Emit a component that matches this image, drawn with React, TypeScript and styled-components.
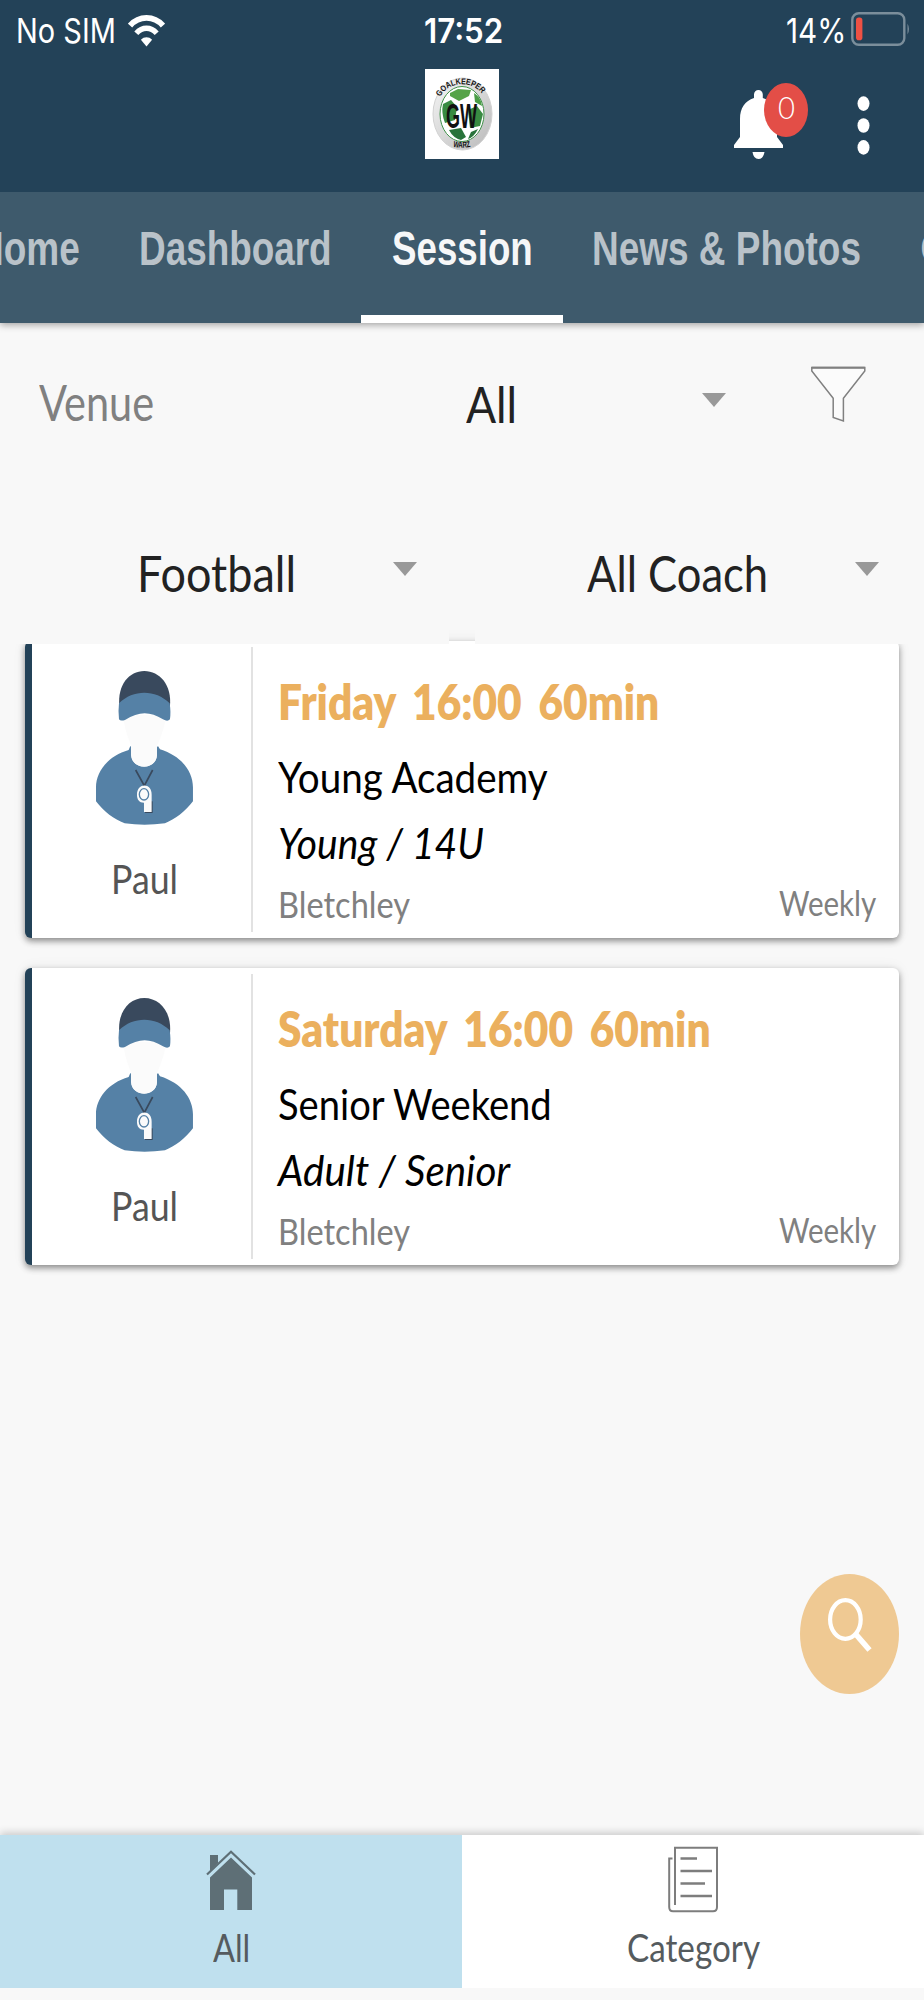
import React, {useLayoutEffect, useRef, useState} from 'react';
import styled, {createGlobalStyle} from "styled-components";

const theme = {
    colors: {
        primary: "#234258",
        tabs: "#3e5a6c",
        page: "#f8f8f8",
        accent: "#ebb05e",
        danger: "#e34e47",
        muted: "#808080",
        active: "#bfe0ee",
    },
    fonts: {
        body: '"Lato", "Open Sans", sans-serif',
        status: '"Inter", "Roboto", sans-serif',
        tabs: '"Liberation Sans", Arial, sans-serif',
    }
}

type FitProps = { width: number, children: string }

// Condenses a line of text to a given width
const Fit = ({width, children}: FitProps) => {
    const ref = useRef<HTMLSpanElement>(null)
    const [scale, setScale] = useState(1)

    useLayoutEffect(() => {
        if (ref.current) setScale(width / ref.current.offsetWidth)
    }, [width, children])

    return (
        <FitBox $width={width}>
            <FitText ref={ref} style={{transform: `scaleX(${scale})`}}>{children}</FitText>
        </FitBox>
    )
}

const sessions = [
    {
        coach: "Paul", time: "Friday 16:00 60min", timeWidth: 381, name: "Young Academy", nameWidth: 270,
        group: "Young / 14U", groupWidth: 206, venue: "Bletchley", repeat: "Weekly"
    },
    {
        coach: "Paul", time: "Saturday 16:00 60min", timeWidth: 433, name: "Senior Weekend", nameWidth: 274,
        group: "Adult / Senior", groupWidth: 232, venue: "Bletchley", repeat: "Weekly"
    },
]

const WifiIcon = () => (
    <svg width="37" height="33" viewBox="0 0 37 33" fill="none">
        <path d="M2 11.5C11 1.2 26 1.2 35 11.5" stroke="#fff" strokeWidth="5.8"/>
        <path d="M8.3 19.2C14.3 12.6 22.7 12.6 28.7 19.2" stroke="#fff" strokeWidth="5.4"/>
        <path d="M18.5 32.5L12.9 25.7C16 22.4 21 22.4 24.1 25.7Z" fill="#fff"/>
    </svg>
)

const BatteryIcon = () => (
    <svg width="60" height="34" viewBox="0 0 60 34">
        <rect x="1.3" y="1.3" width="52" height="31.4" rx="6.5" fill="none" stroke="#7b8e9b" strokeWidth="2.4"/>
        <rect x="5" y="5.6" width="6.4" height="22.6" rx="2.8" fill="#ee5144"/>
        <path d="M56.5 11.5Q59.4 17 56.5 22.5Z" fill="#7b8e9b"/>
    </svg>
)

const ClubLogo = () => (
    <svg width="74" height="90" viewBox="0 0 74 90">
        <defs>
            <linearGradient id="ring" x1="0" y1="0" x2="1" y2="1">
                <stop offset="0" stopColor="#f6f6f6"/>
                <stop offset="1" stopColor="#b9b9b9"/>
            </linearGradient>
            <path id="arcTop" d="M15.5 28C23 11 51 11 58.5 28"/>
            <path id="arcBottom" d="M26 77Q37 80.5 48 77"/>
        </defs>
        <rect width="74" height="90" fill="#fff"/>
        <ellipse cx="37.5" cy="45" rx="29.5" ry="36" fill="url(#ring)" stroke="#d2d2d2" strokeWidth="1"/>
        <ellipse cx="37" cy="45" rx="22" ry="27.5" fill="#fff" stroke="#3f9148" strokeWidth="1"/>
        <path d="M25 24L33 20L46 21L44 27L34 32L25 27Z" fill="#55a347"/>
        <path d="M49 24Q56 28 57 37L50 33Z" fill="#4a9e46"/>
        <path d="M18 35L26 31L32 38L30 51L20 54Q16 44 18 35Z" fill="#398b42"/>
        <path d="M43 41L52 37L58 45L55 57L45 59Z" fill="#398b42"/>
        <path d="M24 61L36 59L41 68L36 71Q28 69 24 61Z" fill="#28733a"/>
        <path d="M46 63L53 60Q49 68 43 70Z" fill="#28733a"/>
        <LogoText x="21" y="58.5" fontSize="35" textLength="31" lengthAdjust="spacingAndGlyphs">GW</LogoText>
        <LogoText fontSize="8.5">
            <textPath href="#arcTop" textLength="49" lengthAdjust="spacingAndGlyphs">GOALKEEPER</textPath>
        </LogoText>
        <LogoText fontSize="8.5">
            <textPath href="#arcBottom" startOffset="2" textLength="18" lengthAdjust="spacingAndGlyphs">WARZ</textPath>
        </LogoText>
    </svg>
)

const BellIcon = () => (
    <svg width="49" height="70" viewBox="0 0 49 70" fill="#fff">
        <path d="M20 8V4.5A4.4 4.5 0 0 1 28.8 4.5V8C38 11 43 18 43 29V47L49 55V58H0V55L6 47V29C6 18 11 11 20 8Z"/>
        <path d="M18.5 62H30.5Q29.5 69 24.5 69T18.5 62Z"/>
    </svg>
)

const DotsIcon = () => (
    <svg width="13" height="60" viewBox="0 0 13 60" fill="#fff">
        <ellipse cx="6.5" cy="7.6" rx="6" ry="7.3"/>
        <ellipse cx="6.5" cy="29.5" rx="6" ry="7.3"/>
        <ellipse cx="6.5" cy="51.4" rx="6" ry="7.3"/>
    </svg>
)

const FunnelIcon = () => (
    <svg width="55" height="57" viewBox="0 0 55 57">
        <path d="M.8 1.5H53.8V5L32.4 32.3V55L22.2 51.5V32.3L.8 5Z" fill="#fbfbfb" stroke="#808080" strokeWidth="1.5"/>
        <path d="M.8 1.7H53.8" stroke="#808080" strokeWidth="2"/>
    </svg>
)

const CoachIcon = () => (
    <svg width="98.3" height="155" viewBox="285 120 295 465">
        <path d="M370 255C372 295 385 325 394 348V385H471V348C481 325 494 295 498 255Z" fill="#fbfbfb"/>
        <path d="M358 228C352 165 387 123 433 123S516 165 510 228Z" fill="#39495d"/>
        <path d="M357 220C400 178 466 178 509 220C512 238 512 255 510 268Q503 276 489 268C450 244 418 243 375 270Q361 274 357 268Q354 245 357 220Z" fill="#5581a6"/>
        <path d="M391 348L394 352V375C396 422 469 422 471 375V352L474 348L480 358C545 378 579 425 579 472V514C555 546 525 568 495 580Q433 588 374 580C342 568 312 546 288 514V472C288 425 324 378 386 360Z" fill="#5581a6"/>
        <path d="M393 350V375C395 421 469 421 471 375V350Z" fill="#fbfbfb"/>
        <path d="M407 420L433 467L458 420" fill="none" stroke="#39495d" strokeWidth="5"/>
        <path d="M435 514H458V549H435Z" fill="#39495d"/>
        <path d="M411 494C411 457 456 457 455 494V546H432V518C418 518 411 509 411 494Z" fill="#fbfbfb"/>
        <ellipse cx="432" cy="493" rx="14" ry="17" fill="#fbfbfb" stroke="#5581a6" strokeWidth="4"/>
    </svg>
)

const SearchIcon = () => (
    <svg width="45" height="55" viewBox="0 0 45 55" fill="none" stroke="#fff">
        <ellipse cx="17.4" cy="21.5" rx="15.3" ry="19.3" strokeWidth="4.2"/>
        <path d="M28 36.5L41.5 52" strokeWidth="5.6"/>
    </svg>
)

const HomeIcon = () => (
    <svg width="50" height="61" viewBox="0 0 50 61" fill="#5e6f76">
        <path d="M4 5H12V13L4 21Z"/>
        <path d="M1 24.5L25 1.8L49 24.5" fill="none" stroke="#5e6f76" strokeWidth="2.2"/>
        <path d="M25 7.5L46 27.5V60H31.3V39.5H18V60H4V27.5Z"/>
    </svg>
)

const CategoryIcon = () => (
    <svg width="50" height="67" viewBox="0 0 50 67" fill="none" stroke="#7d7d7d" strokeWidth="2">
        <path d="M7 59V1.8H49V61Q49 65.3 45 65.3H5Q1.2 65.3 1.2 61V12.5H4.5"/>
        <path d="M12.5 12.5H29M12.5 25H44M12.5 37.5H37M12.5 50H44" strokeWidth="2.6"/>
    </svg>
)

const App = () => {
    return (
        <Screen>
            <GlobalStyle/>
            <Header>
                <StatusBar>
                    <Network>
                        <Fit width={100}>No SIM</Fit>
                        <WifiIcon/>
                    </Network>
                    <Clock><Fit width={79}>17:52</Fit></Clock>
                    <Power>
                        <Fit width={60}>14%</Fit>
                        <BatteryIcon/>
                    </Power>
                </StatusBar>
                <AppBar>
                    <ClubLogo/>
                    <Actions>
                        <Bell>
                            <BellIcon/>
                            <Badge><Fit width={17}>0</Fit></Badge>
                        </Bell>
                        <DotsIcon/>
                    </Actions>
                </AppBar>
            </Header>

            <Tabs>
                <Tab $width={164}><Fit width={103}>Home</Fit></Tab>
                <Tab $width={251}><Fit width={193}>Dashboard</Fit></Tab>
                <Tab $width={202} $active><Fit width={141}>Session</Fit></Tab>
                <Tab $width={327}><Fit width={269}>News &amp; Photos</Fit></Tab>
                <Tab $width={94}><Fit width={34}>C</Fit></Tab>
            </Tabs>

            <VenueRow>
                <VenueLabel><Fit width={115}>Venue</Fit></VenueLabel>
                <VenueSelect $left={126} $right={85}>
                    <Value><Fit width={51}>All</Fit></Value>
                    <Arrow/>
                </VenueSelect>
                <FunnelIcon/>
            </VenueRow>
            <FilterRow>
                <Select $left={39} $right={32}>
                    <Value><Fit width={159}>Football</Fit></Value>
                    <Arrow/>
                </Select>
                <Select $left={24} $right={45}>
                    <Value><Fit width={181}>All Coach</Fit></Value>
                    <Arrow/>
                </Select>
            </FilterRow>

            <SessionList>
                {sessions.map(s => (
                    <Card key={s.time}>
                        <CoachColumn>
                            <CoachIcon/>
                            <CoachName><Fit width={67}>{s.coach}</Fit></CoachName>
                        </CoachColumn>
                        <Details>
                            <Time><Fit width={s.timeWidth}>{s.time}</Fit></Time>
                            <SessionName><Fit width={s.nameWidth}>{s.name}</Fit></SessionName>
                            <Group><Fit width={s.groupWidth}>{s.group}</Fit></Group>
                            <CardFooter>
                                <Venue><Fit width={132}>{s.venue}</Fit></Venue>
                                <Repeat><Fit width={97}>{s.repeat}</Fit></Repeat>
                            </CardFooter>
                        </Details>
                    </Card>
                ))}
            </SessionList>

            <SearchButton><SearchIcon/></SearchButton>

            <BottomNav>
                <NavItem $active $top={15}>
                    <HomeIcon/>
                    <NavLabel><Fit width={37}>All</Fit></NavLabel>
                </NavItem>
                <NavItem $top={11}>
                    <CategoryIcon/>
                    <NavLabel><Fit width={133}>Category</Fit></NavLabel>
                </NavItem>
            </BottomNav>
        </Screen>
    );
};

export default App;

const GlobalStyle = createGlobalStyle`
  * {
    box-sizing: border-box;
  }

  body {
    margin: 0;
    background-color: ${theme.colors.page};
    font-family: ${theme.fonts.body};
  }

  svg {
    display: block;
    flex-shrink: 0;
  }
`

const FitBox = styled.span<{ $width: number }>`
  display: block;
  flex-shrink: 0;
  width: ${props => props.$width}px;
`

const FitText = styled.span`
  display: inline-block;
  vertical-align: top;
  white-space: nowrap;
  transform-origin: 0 0;
`

const LogoText = styled.text`
  font-family: ${theme.fonts.tabs};
  font-weight: 700;
  fill: #111;
`

const Screen = styled.div`
  position: relative;
  display: flex;
  flex-direction: column;
  width: 924px;
  height: 2000px;
  overflow: hidden;
  background-color: ${theme.colors.page};
`

const Header = styled.header`
  height: 192px;
  flex-shrink: 0;
  background-color: ${theme.colors.primary};
`

const StatusBar = styled.div`
  height: 62px;
  padding: 0 13px 0 16px;
  display: grid;
  grid-template-columns: 1fr auto 1fr;
  align-items: center;
  color: #fff;
  font-family: ${theme.fonts.status};
  font-size: 33.6px;
  line-height: 44px;
`

const Network = styled.div`
  display: flex;
  align-items: center;
  gap: 12px;

  svg {
    margin-bottom: 2px;
  }
`

const Clock = styled.div`
  font-weight: 600;
`

const Power = styled.div`
  display: flex;
  align-items: center;
  justify-content: flex-end;
  gap: 5px;

  svg {
    margin-bottom: 4px;
  }
`

const AppBar = styled.div`
  display: grid;
  grid-template-columns: 1fr 74px 1fr;
  padding: 7px 54px 0;

  > svg {
    grid-column: 2;
  }
`

const Actions = styled.div`
  display: flex;
  justify-content: flex-end;
  align-items: flex-start;
  gap: 74px;
  padding-top: 21px;

  > svg {
    margin-top: 6px;
  }
`

const Bell = styled.div`
  position: relative;
`

const Badge = styled.span`
  position: absolute;
  top: -7px;
  left: 30px;
  display: flex;
  justify-content: center;
  width: 44px;
  height: 54px;
  border-radius: 50%;
  background-color: ${theme.colors.danger};
  color: #fff;
  font-weight: 300;
  font-size: 31px;
  line-height: 48px;
`

const Tabs = styled.nav`
  position: relative;
  display: flex;
  flex-shrink: 0;
  height: 131px;
  padding-left: 110px;
  background-color: ${theme.colors.tabs};
  box-shadow: 0 2px 7px rgba(0, 0, 0, 0.35);
  clip-path: inset(0 0 -12px 0);

  > :first-child {
    margin-left: -164px;
  }
`

const Tab = styled.a<{ $width: number, $active?: boolean }>`
  display: flex;
  flex-shrink: 0;
  align-items: center;
  justify-content: center;
  width: ${props => props.$width}px;
  padding-bottom: 9px;
  border-bottom: 8px solid ${props => props.$active ? "#fff" : "transparent"};
  color: ${props => props.$active ? "#f6f7f8" : "#b9c2c9"};
  font-family: ${theme.fonts.tabs};
  font-size: 47.4px;
  font-weight: 700;
  line-height: 56px;
`

const VenueRow = styled.div`
  display: flex;
  align-items: center;
  flex-shrink: 0;
  height: 159px;
  padding-left: 39px;
  font-size: 49.8px;
  line-height: 60px;

  > svg {
    margin-bottom: 16px;
  }
`

const VenueLabel = styled.label`
  margin-bottom: 1px;
  color: ${theme.colors.muted};
`

const FilterRow = styled.div`
  position: relative;
  z-index: 1;
  display: flex;
  flex-shrink: 0;
  justify-content: space-between;
  height: 162px;
  font-size: 49.8px;
  line-height: 60px;

  > div {
    padding-top: 17px;
  }
`

const Select = styled.div<{ $left: number, $right: number }>`
  display: flex;
  align-items: center;
  flex-shrink: 0;
  width: 449px;
  padding-left: ${props => props.$left}px;
  padding-right: ${props => props.$right}px;
  background-color: ${theme.colors.page};
`

const VenueSelect = styled(Select)`
  width: 657px;
`

const Value = styled.div`
  display: flex;
  justify-content: center;
  flex: 1;
  margin-top: 2px;
  color: #222;
`

const Arrow = styled.span`
  border-left: 12px solid transparent;
  border-right: 12px solid transparent;
  border-top: 14px solid #999;
  margin-bottom: 6px;
`

const SessionList = styled.main`
  display: flex;
  flex-direction: column;
  gap: 30px;
  margin-top: -3px;
  padding: 0 25px;
`

const Card = styled.article`
  display: flex;
  height: 297px;
  border-left: 7px solid ${theme.colors.primary};
  border-radius: 6px;
  background-color: #fff;
  box-shadow: 0 3px 6px rgba(0, 0, 0, 0.42), 0 0 14px rgba(0, 0, 0, 0.07);
`

const CoachColumn = styled.div`
  display: flex;
  flex-direction: column;
  align-items: center;
  width: 221px;
  margin: 6px 0 6px;
  padding: 23px 0 0 5px;
  border-right: 2px solid #e2e2e2;
`

const CoachName = styled.div`
  margin-top: 30px;
  color: #555;
  font-size: 40px;
  line-height: 48px;
`

const Details = styled.div`
  display: flex;
  flex-direction: column;
  flex: 1;
  padding: 24px 23px 0 25px;
`

const Time = styled.h2`
  margin: 0;
  color: ${theme.colors.accent};
  font-size: 49px;
  font-weight: 800;
  line-height: 72px;
  word-spacing: 8px;
`

const SessionName = styled.div`
  margin-top: 9px;
  color: #000;
  font-size: 43px;
  line-height: 62px;
`

const Group = styled(SessionName)`
  margin-top: 4px;
  font-style: italic;
`

const CardFooter = styled.div`
  display: flex;
  justify-content: space-between;
  align-items: flex-start;
  margin-top: 8px;
  color: ${theme.colors.muted};
`

const Venue = styled.span`
  font-size: 37px;
  line-height: 44px;
`

const Repeat = styled.span`
  font-size: 35px;
  line-height: 40px;
`

const SearchButton = styled.button`
  position: absolute;
  right: 25px;
  bottom: 306px;
  display: flex;
  align-items: flex-start;
  width: 99px;
  height: 120px;
  padding: 24px 0 0 28px;
  border: none;
  border-radius: 50%;
  background-color: #efc993;
`

const BottomNav = styled.footer`
  display: flex;
  flex-shrink: 0;
  height: 153px;
  margin-top: auto;
  margin-bottom: 12px;
  box-shadow: 0 -2px 8px rgba(0, 0, 0, 0.2);
  clip-path: inset(-20px 0 0 0);
`

const NavItem = styled.a<{ $top: number, $active?: boolean }>`
  display: flex;
  flex: 1;
  flex-direction: column;
  align-items: center;
  justify-content: space-between;
  padding: ${props => props.$top}px 0 17px;
  background-color: ${props => props.$active ? theme.colors.active : "#fff"};
`

const NavLabel = styled.span`
  color: #555b5e;
  font-size: 39.5px;
  line-height: 48px;
`
